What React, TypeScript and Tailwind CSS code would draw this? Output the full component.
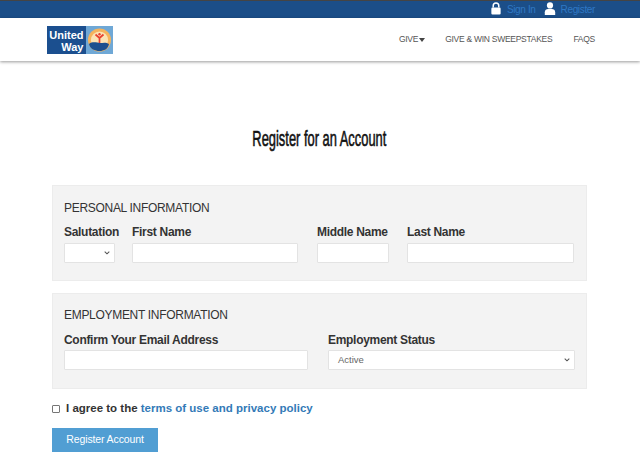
export default function App() {
  const label = "block text-[12px] tracking-[-0.3px] leading-[15px] font-bold text-[#333] whitespace-nowrap";
  const input = "block h-[20px] bg-white border border-[#e3e3e3] rounded-[1px]";
  const Chevron = () => (
    <svg width="6" height="4" viewBox="0 0 6 4" className="absolute right-[4px] top-[7px]">
      <path d="M0.7 0.7l2.3 2.1 2.3-2.1" fill="none" stroke="#555" strokeWidth="1.1" />
    </svg>
  );
  return (
    <div className="w-[640px] h-[475px] overflow-hidden bg-white font-['Liberation_Sans',Arial,sans-serif] text-[#333]">
      <div className="h-[18px] bg-[#1b4e88] border-t border-t-[#444] flex justify-end items-center pr-[45px] text-[10px] tracking-[-0.35px] text-[#2f78c4]">
        <svg width="12" height="13" viewBox="0 0 12 14" className="mr-[5px] -mt-[2px]">
          <path d="M3 6V4a3 3 0 0 1 6 0v2" fill="none" stroke="#fff" strokeWidth="1.6" />
          <rect x="1" y="6" width="10" height="7.500" rx="1.2" fill="#fff" />
        </svg>
        <span>Sign In</span>
        <svg width="12" height="13" viewBox="0 0 12 13" className="ml-[8px] mr-[5px] -mt-[2px]">
          <circle cx="6" cy="3.4" r="3.1" fill="#fff" />
          <path d="M0.8 13V10.2C0.8 8.2 2.5 7 4 7h4c1.5 0 3.2 1.2 3.2 3.2V13z" fill="#fff" />
        </svg>
        <span>Register</span>
      </div>
      <div className="h-[43px] bg-white shadow-[0_1px_3px_rgba(0,0,0,0.4)] flex items-center pl-[47px] pr-[45px] relative">
        <svg width="66" height="28" viewBox="0 0 66 28" className="shrink-0">
          <rect width="39" height="28" fill="#1b4f8f" />
          <rect x="39" width="27" height="28" fill="#6fa8d6" />
          <circle cx="52.500" cy="14" r="11.500" fill="#f5b35c" />
          <circle cx="52.500" cy="14" r="8.600" fill="#fbe3b5" />
          <path d="M52.500 19v-7M48.500 8.500l4 3.500 4-3.500" fill="none" stroke="#e8412f" strokeWidth="1.7" />
          <circle cx="52.500" cy="8.300" r="1.2" fill="#e8412f" />
          <path d="M42 18c4-3 8-1 11-1s6-1 9 1c-1 5-5 7-9.500 7S43 23 42 18z" fill="#1b4f8f" />
          <text x="36.500" y="12.500" textAnchor="end" fill="#fff" fontSize="11" fontWeight="700" fontFamily="Liberation Sans, sans-serif">United</text>
          <text x="36.500" y="24.500" textAnchor="end" fill="#fff" fontSize="11" fontWeight="700" fontFamily="Liberation Sans, sans-serif">Way</text>
        </svg>
        <div className="ml-auto flex items-center text-[8.5px] tracking-[-0.27px] text-[#555]">
          <span className="flex items-center">GIVE
            <svg width="6" height="4" viewBox="0 0 6 4" className="ml-[1px]"><path d="M0 0h6L3 4z" fill="#444" /></svg>
          </span>
          <span className="ml-[20px]">GIVE &amp; WIN SWEEPSTAKES</span>
          <span className="ml-[21px]">FAQS</span>
        </div>
      </div>
      <h1 className="mt-[64px] h-[28px] flex justify-center items-center pr-[2px] text-[#111]">
        <span className="inline-block scale-x-[0.586] font-['Liberation_Sans',sans-serif] text-[22px] leading-[28px] font-normal whitespace-nowrap [-webkit-text-stroke:0.6px_#111]">Register for an Account</span>
      </h1>
      <div className="mt-[32px] mx-[52px] w-[535px]">
        <section className="h-[96px] bg-[#f3f3f3] border border-[#ececec] pt-[15px] px-[11px]">
          <div className="text-[12px] tracking-[-0.3px] leading-[14px] text-[#333]">PERSONAL INFORMATION</div>
          <div className="flex mt-[10px]">
            <div className="w-[51px]"><span className={label + " mb-[3px]"}>Salutation</span>
              <div className={input + " w-[51px] relative"}><Chevron /></div></div>
            <div className="w-[166px] ml-[17px]"><span className={label + " mb-[3px]"}>First Name</span>
              <div className={input + " w-[166px]"} /></div>
            <div className="w-[72px] ml-[19px]"><span className={label + " mb-[3px]"}>Middle Name</span>
              <div className={input + " w-[72px]"} /></div>
            <div className="w-[167px] ml-[18px]"><span className={label + " mb-[3px]"}>Last Name</span>
              <div className={input + " w-[167px]"} /></div>
          </div>
        </section>
        <section className="h-[96px] mt-[12px] bg-[#f3f3f3] border border-[#ececec] pt-[14px] px-[11px]">
          <div className="text-[12px] tracking-[-0.3px] leading-[14px] text-[#333]">EMPLOYMENT INFORMATION</div>
          <div className="flex mt-[11px]">
            <div className="w-[244px]"><span className={label + " mb-[2px]"}>Confirm Your Email Address</span>
              <div className={input + " w-[244px]"} /></div>
            <div className="w-[247px] ml-[20px]"><span className={label + " mb-[2px]"}>Employment Status</span>
              <div className={input + " w-[247px] relative text-[9.5px] leading-[18px] pl-[9px] text-[#666]"}>Active<Chevron /></div></div>
          </div>
        </section>
        <div className="flex items-center mt-[12px] h-[15px]">
          <span className="block w-[8px] h-[8px] border border-[#767676] rounded-[1px] bg-white" />
          <span className="ml-[6px] text-[11.5px] font-bold text-[#333] whitespace-nowrap">I agree to the <span className="text-[#337ab7]">terms of use and privacy policy</span></span>
        </div>
        <div className="mt-[12px] w-[106px] h-[24px] bg-[#519ed3] text-white text-[10.5px] tracking-[-0.12px] leading-[23px] text-center">Register Account</div>
      </div>
    </div>
  );
}
